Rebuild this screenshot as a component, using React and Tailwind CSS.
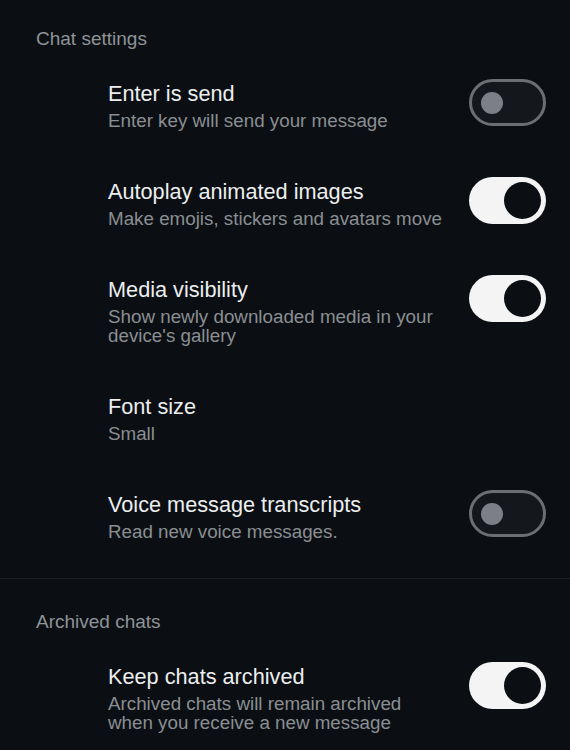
const chatRows = [
  { title: 'Enter is send', sub: ['Enter key will send your message'], toggle: 'off' },
  { title: 'Autoplay animated images', sub: ['Make emojis, stickers and avatars move'], toggle: 'on' },
  { title: 'Media visibility', sub: ["Show newly downloaded media in your device's gallery"], toggle: 'on' },
  { title: 'Font size', sub: ['Small'] },
  { title: 'Voice message transcripts', sub: ['Read new voice messages.'], toggle: 'off' },
];

function Toggle({ on }) {
  if (on) {
    return (
      <div className="flex h-[47px] w-[77px] shrink-0 items-center justify-end rounded-full bg-[#f4f4f4] pr-[5px]">
        <div className="h-[37px] w-[37px] rounded-full bg-[#0b0f13]" />
      </div>
    );
  }
  return (
    <div className="flex h-[47px] w-[77px] shrink-0 items-center rounded-full border-[3px] border-[#6b6f74] bg-[#14181c] pl-[9px]">
      <div className="h-[22px] w-[22px] rounded-full bg-[#7c8086]" />
    </div>
  );
}

function SettingRow({ title, sub, toggle }) {
  return (
    <div className="flex items-start pb-[25px] pl-[108px] pr-[24px] pt-[24px]">
      <div className="flex w-[334px] flex-col gap-[4px]">
        <div className="text-[21.7px] leading-[26px] text-[#eceef0]">{title}</div>
        <div className="text-[18.8px] leading-[19px] text-[#8a8e92]">{sub}</div>
      </div>
      {toggle && (
        <div className="ml-auto mt-[-2px]">
          <Toggle on={toggle === 'on'} />
        </div>
      )}
    </div>
  );
}

export default function App() {
  return (
    <div className="h-[750px] w-[570px] overflow-hidden bg-[#0b0f13] font-['Liberation_Sans',Arial,sans-serif]">
      <section className="border-b border-[#1c2125] pb-[12px] pt-[27px]">
        <h2 className="pl-[36px] text-[19px] leading-[24px] text-[#8f9397]">Chat settings</h2>
        <div className="mt-[6px]">
          {chatRows.map((row) => (
            <SettingRow key={row.title} {...row} />
          ))}
        </div>
      </section>
      <section className="pt-[31px]">
        <h2 className="pl-[36px] text-[19px] leading-[24px] text-[#8f9397]">Archived chats</h2>
        <div className="mt-[6px]">
          <SettingRow
            title="Keep chats archived"
            sub="Archived chats will remain archived when you receive a new message"
            toggle="on"
          />
        </div>
      </section>
    </div>
  );
}
